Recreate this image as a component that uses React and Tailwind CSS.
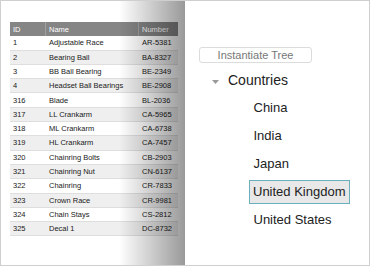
import React from 'react';

const rows = [
    ['1', 'Adjustable Race', 'AR-5381'],
    ['2', 'Bearing Ball', 'BA-8327'],
    ['3', 'BB Ball Bearing', 'BE-2349'],
    ['4', 'Headset Ball Bearings', 'BE-2908'],
    ['316', 'Blade', 'BL-2036'],
    ['317', 'LL Crankarm', 'CA-5965'],
    ['318', 'ML Crankarm', 'CA-6738'],
    ['319', 'HL Crankarm', 'CA-7457'],
    ['320', 'Chainring Bolts', 'CB-2903'],
    ['321', 'Chainring Nut', 'CN-6137'],
    ['322', 'Chainring', 'CR-7833'],
    ['323', 'Crown Race', 'CR-9981'],
    ['324', 'Chain Stays', 'CS-2812'],
    ['325', 'Decal 1', 'DC-8732'],
];

const countries = ['China', 'India', 'Japan', 'United Kingdom', 'United States'];

const App = () => {
    return (
        <div className="w-[370px] h-[266px] border border-[#cfcfcf] bg-white flex overflow-hidden font-['Liberation_Sans',Arial,sans-serif]">
            {/* grid page with shadow */}
            <div className="relative w-[184px] h-full pl-[9px] pt-[21px] bg-white">
                <div className="w-[168px] text-[7.5px] text-[#1a1a1a]">
                    <div className="flex h-[14.3px] bg-[#858585] text-white items-center">
                        <div className="w-[36px] pl-[3px] border-r border-[#a0a0a0] h-full flex items-center">ID</div>
                        <div className="w-[93px] pl-[3px] border-r border-[#a0a0a0] h-full flex items-center">Name</div>
                        <div className="flex-1 pl-[3px]">Number</div>
                    </div>
                    {rows.map((r, i) => (
                        <div
                            key={r[0]}
                            className={`flex h-[14.3px] items-center border-b border-[#dedede] ${i % 2 === 0 ? 'bg-white' : 'bg-[#efefef]'}`}
                        >
                            <div className="w-[36px] pl-[3px]">{r[0]}</div>
                            <div className="w-[93px] pl-[3px]">{r[1]}</div>
                            <div className="flex-1 pl-[3px]">{r[2]}</div>
                        </div>
                    ))}
                </div>
                <div className="absolute inset-y-0 right-0 w-[66px] bg-gradient-to-r from-transparent to-black/40" />
            </div>

            {/* tree panel */}
            <div className="flex-1 pl-[14px] pt-[46px]">
                <button className="block w-[113px] h-[16px] border border-[#dcdcdc] rounded-[3px] bg-white text-[11px] text-[#777] leading-none">
                    Instantiate Tree
                </button>
                <div className="mt-[3px] text-[13px] text-[#222]">
                    <div className="h-[28px] flex items-center">
                        <svg width="7" height="4" viewBox="0 0 7 4" className="ml-[13px] mt-[4px]">
                            <path d="M0 0 L7 0 L3.5 4 Z" fill="#999" />
                        </svg>
                        <span className="ml-[9px] text-[14px]">Countries</span>
                    </div>
                    {countries.map(c => (
                        <div key={c} className="h-[28px] flex items-center pl-[50px]">
                            {c === 'United Kingdom' ? (
                                <span className="h-[24px] flex items-center px-[3px] border-[1.5px] border-[#6aafbe] bg-[#e8e8e8]">
                                    {c}
                                </span>
                            ) : (
                                <span className="px-[4.5px]">{c}</span>
                            )}
                        </div>
                    ))}
                </div>
            </div>
        </div>
    );
};

export default App;
